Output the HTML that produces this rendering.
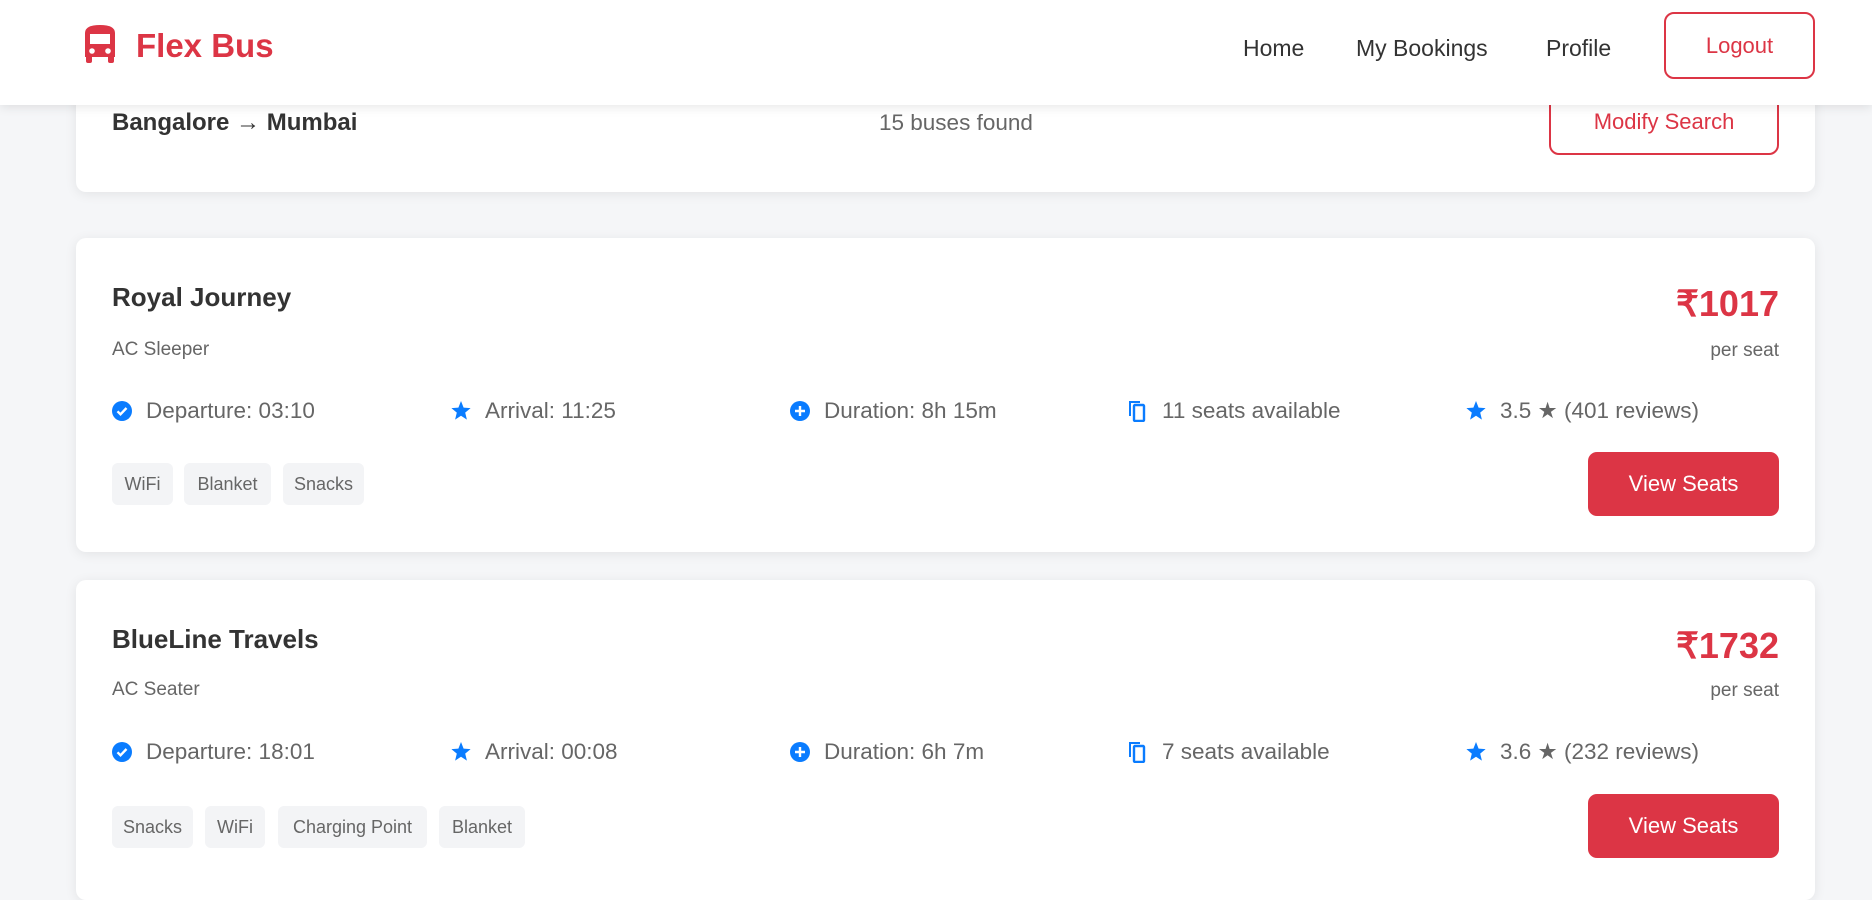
<!DOCTYPE html>
<html><head><meta charset="utf-8"><style>
*{box-sizing:border-box;margin:0;padding:0}
body{width:1872px;height:861px;overflow:hidden;background:#f5f6f8;font-family:"Liberation Sans",sans-serif;position:relative;color:#333}
.abs{position:absolute;white-space:nowrap}
header{position:absolute;left:0;top:0;width:1872px;height:105px;background:#fff;box-shadow:0 2px 10px rgba(0,0,0,.1);z-index:5}
.card{position:absolute;left:76px;width:1739px;background:#fff;border-radius:10px;box-shadow:0 2px 12px rgba(0,0,0,.08)}
.nav{font-size:23px;color:#333;top:35px}
.obtn{position:absolute;border:2px solid #dc3545;border-radius:10px;color:#dc3545;font-size:22px;display:flex;align-items:center;justify-content:center}
.title{font-size:26px;font-weight:bold;color:#333;left:36px}
.sub{font-size:19px;color:#666;left:36px}
.price{font-size:36px;font-weight:bold;color:#dc3545;right:36px}
.per{font-size:19px;color:#666;right:36px}
.info{font-size:22.5px;color:#666;display:flex;align-items:center}
.info svg{margin-right:14px}
.tag{position:absolute;height:42px;background:#f3f4f6;border-radius:6px;font-size:18px;color:#666;display:flex;align-items:center;justify-content:center}
.vbtn{position:absolute;right:36px;width:191px;height:64px;background:#dc3545;border-radius:9px;color:#fff;font-size:22px;display:flex;align-items:center;justify-content:center}
</style></head><body>
<header>
<svg class="abs" style="left:83px;top:25px" width="34" height="38" viewBox="0 0 34 38"><path d="M2 8Q2 0 17 0Q32 0 32 8V32H2Z" fill="#dc3545"/><rect x="7" y="9" width="20" height="10" fill="#fff"/><circle cx="9" cy="26" r="2.8" fill="#fff"/><circle cx="25" cy="26" r="2.8" fill="#fff"/><rect x="3" y="30" width="6" height="8" rx="2" fill="#dc3545"/><rect x="25" y="30" width="6" height="8" rx="2" fill="#dc3545"/></svg>
<div class="abs" style="left:136px;top:27px;font-size:33px;font-weight:bold;color:#dc3545">Flex Bus</div>
<div class="abs nav" style="left:1243px">Home</div>
<div class="abs nav" style="left:1356px">My Bookings</div>
<div class="abs nav" style="left:1546px">Profile</div>
<div class="obtn" style="left:1664px;top:12px;width:151px;height:67px">Logout</div>
</header>

<div class="card" style="top:60px;height:132px">
<div class="abs" style="left:36px;top:49px;font-size:24px;font-weight:bold;color:#333">Bangalore → Mumbai</div>
<div class="abs" style="left:803px;top:50px;font-size:22.5px;color:#666">15 buses found</div>
<div class="obtn" style="left:1473px;top:28px;width:230px;height:67px">Modify Search</div>
</div>

<div class="card" style="top:238px;height:314px">
<div class="abs title" style="top:44px">Royal Journey</div>
<div class="abs sub" style="top:101px">AC Sleeper</div>
<div class="abs price" style="top:45px">₹1017</div>
<div class="abs per" style="top:102px">per seat</div>
<div class="abs info" style="left:36px;top:160px"><svg width="20" height="20" viewBox="0 0 20 20"><circle cx="10" cy="10" r="10" fill="#0a7cff"/><path d="M5.5 10.3l3 3 6-6.3" stroke="#fff" stroke-width="2.4" fill="none"/></svg>Departure: 03:10</div>
<div class="abs info" style="left:375px;top:160px"><svg width="20" height="20" viewBox="0 0 20 20"><path d="M10 0l2.6 6.6 7 .5-5.4 4.5 1.7 7-5.9-3.8-5.9 3.8 1.7-7L.4 7.1l7-.5z" fill="#0a7cff"/></svg>Arrival: 11:25</div>
<div class="abs info" style="left:714px;top:160px"><svg width="20" height="20" viewBox="0 0 20 20"><circle cx="10" cy="10" r="10" fill="#0a7cff"/><path d="M10 5v10M5 10h10" stroke="#fff" stroke-width="2.4"/></svg>Duration: 8h 15m</div>
<div class="abs info" style="left:1052px;top:160px"><svg width="20" height="22" viewBox="0 0 20 22"><path d="M2 16V2h10" stroke="#0a7cff" stroke-width="2" fill="none"/><rect x="6" y="5" width="10" height="16" rx="1" stroke="#0a7cff" stroke-width="2.4" fill="none"/></svg>11 seats available</div>
<div class="abs info" style="left:1390px;top:160px"><svg width="20" height="20" viewBox="0 0 20 20"><path d="M10 0l2.6 6.6 7 .5-5.4 4.5 1.7 7-5.9-3.8-5.9 3.8 1.7-7L.4 7.1l7-.5z" fill="#0a7cff"/></svg>3.5 ★ (401 reviews)</div>
<div class="tag" style="left:36px;top:225px;width:61px">WiFi</div>
<div class="tag" style="left:108px;top:225px;width:87px">Blanket</div>
<div class="tag" style="left:207px;top:225px;width:81px">Snacks</div>
<div class="vbtn" style="top:214px">View Seats</div>
</div>

<div class="card" style="top:580px;height:320px">
<div class="abs title" style="top:44px">BlueLine Travels</div>
<div class="abs sub" style="top:99px">AC Seater</div>
<div class="abs price" style="top:45px">₹1732</div>
<div class="abs per" style="top:100px">per seat</div>
<div class="abs info" style="left:36px;top:159px"><svg width="20" height="20" viewBox="0 0 20 20"><circle cx="10" cy="10" r="10" fill="#0a7cff"/><path d="M5.5 10.3l3 3 6-6.3" stroke="#fff" stroke-width="2.4" fill="none"/></svg>Departure: 18:01</div>
<div class="abs info" style="left:375px;top:159px"><svg width="20" height="20" viewBox="0 0 20 20"><path d="M10 0l2.6 6.6 7 .5-5.4 4.5 1.7 7-5.9-3.8-5.9 3.8 1.7-7L.4 7.1l7-.5z" fill="#0a7cff"/></svg>Arrival: 00:08</div>
<div class="abs info" style="left:714px;top:159px"><svg width="20" height="20" viewBox="0 0 20 20"><circle cx="10" cy="10" r="10" fill="#0a7cff"/><path d="M10 5v10M5 10h10" stroke="#fff" stroke-width="2.4"/></svg>Duration: 6h 7m</div>
<div class="abs info" style="left:1052px;top:159px"><svg width="20" height="22" viewBox="0 0 20 22"><path d="M2 16V2h10" stroke="#0a7cff" stroke-width="2" fill="none"/><rect x="6" y="5" width="10" height="16" rx="1" stroke="#0a7cff" stroke-width="2.4" fill="none"/></svg>7 seats available</div>
<div class="abs info" style="left:1390px;top:159px"><svg width="20" height="20" viewBox="0 0 20 20"><path d="M10 0l2.6 6.6 7 .5-5.4 4.5 1.7 7-5.9-3.8-5.9 3.8 1.7-7L.4 7.1l7-.5z" fill="#0a7cff"/></svg>3.6 ★ (232 reviews)</div>
<div class="tag" style="left:36px;top:226px;width:81px">Snacks</div>
<div class="tag" style="left:129px;top:226px;width:60px">WiFi</div>
<div class="tag" style="left:202px;top:226px;width:149px">Charging Point</div>
<div class="tag" style="left:363px;top:226px;width:86px">Blanket</div>
<div class="vbtn" style="top:214px">View Seats</div>
</div>
</body></html>
